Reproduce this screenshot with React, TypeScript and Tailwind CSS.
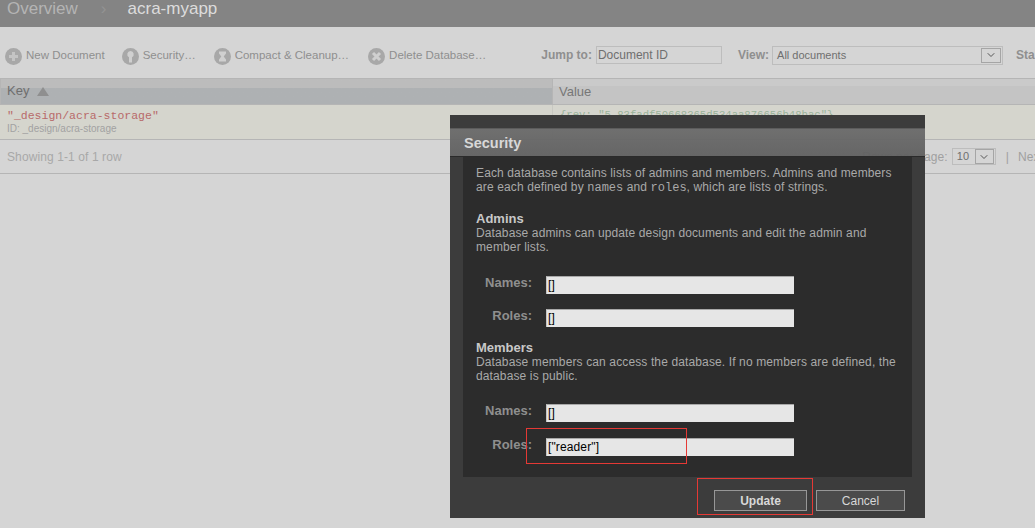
import { ChevronDown } from "lucide-react";

const sans = "font-['Liberation_Sans',Arial,sans-serif]";
const mono = "font-['Liberation_Mono','Courier_New',monospace]";

function CircleIcon({ kind }: { kind: "plus" | "key" | "compact" | "delete" }) {
  return (
    <svg width="17" height="17" viewBox="0 0 17 17" className="shrink-0">
      <circle cx="8.5" cy="8.5" r="8.5" fill="#a8a8a8" />
      {kind === "plus" && <path d="M8.5 4v9M4 8.500h9" stroke="#c4c4c4" strokeWidth="3" />}
      {kind === "key" && (
        <path d="M8.500 3a3.300 3.300 0 0 1 1.500 6.200V14.500H7V9.200A3.300 3.300 0 0 1 8.500 3z" fill="#d0d0d0" />
      )}
      {kind === "compact" && <path d="M5 3.500h7v2L9.700 8.500 12 11.500v2H5v-2l2.300-3L5 5.500z" fill="#d0d0d0" />}
      {kind === "delete" && <path d="M5 5l7 7M12 5l-7 7" stroke="#d0d0d0" strokeWidth="3" />}
    </svg>
  );
}

function ToolItem({ kind, label, className }: { kind: "plus" | "key" | "compact" | "delete"; label: string; className: string }) {
  return (
    <div className={`flex shrink-0 items-center gap-[4px] whitespace-nowrap text-[11.5px] text-[#8f8f8f] ${className}`}>
      <CircleIcon kind={kind} />
      <span className="pb-[1px]">{label}</span>
    </div>
  );
}

function Field({ label, value }: { label: string; value: string }) {
  return (
    <div className="flex h-[18px] items-center">
      <span className="w-[56px] pb-[5px] text-right text-[13px] font-bold leading-none tracking-normal text-[#8f8f8f]">
        {label}
      </span>
      <span className="ml-[14px] flex h-[18px] w-[248px] items-center border-t border-l border-t-[#a8a8a8] border-l-[#c4c4c4] bg-[#e6e6e6] pb-[1px] pl-[1px] text-[12px] text-black">
        {value}
      </span>
    </div>
  );
}

function SecurityModal() {
  return (
    <div className={`absolute left-[450px] top-[115px] z-10 flex h-[403px] w-[475px] flex-col ${sans}`}>
      <div className="h-[13px] bg-[#3c3c3c]" />
      <div className="flex h-[29px] items-center border-y border-t-[#5c5c5c] border-b-[#2a2a2a] bg-gradient-to-b from-[#6a6a6a]/95 to-[#606060]/95 pl-[14px] pt-[2px] text-[14.5px] font-bold text-[#d8d8d8]">
        Security
      </div>
      <div className="flex-1 bg-[#3c3c3c]">
        <div className="mx-[13px] flex h-[320px] flex-col whitespace-nowrap bg-[#2c2c2c] px-[13px] pt-[9px] text-[12px] leading-[14px] tracking-[0.125px] text-[#a9a9a9]">
          <p>Each database contains lists of admins and members. Admins and members</p>
          <p className="h-[14px]">
            are each defined by <code className={`${mono} text-[12px] leading-none tracking-normal`}>names</code> and{" "}
            <code className={`${mono} text-[12px] leading-none tracking-normal`}>roles</code>, which are lists of strings.
          </p>
          <h3 className="mt-[18px] text-[13px] font-bold leading-[14px] tracking-normal text-[#c8c8c8]">Admins</h3>
          <p>Database admins can update design documents and edit the admin and</p>
          <p>member lists.</p>
          <div className="mt-[22px] flex flex-col gap-[15px]">
            <Field label="Names:" value="[]" />
            <Field label="Roles:" value="[]" />
          </div>
          <h3 className="mt-[14px] text-[13px] font-bold leading-[14px] tracking-normal text-[#c8c8c8]">Members</h3>
          <p>Database members can access the database. If no members are defined, the</p>
          <p>database is public.</p>
          <div className="mt-[21px] flex flex-col gap-[16px]">
            <Field label="Names:" value="[]" />
            <Field label="Roles:" value='["reader"]' />
          </div>
        </div>
        <div className="flex justify-end gap-[9px] pr-[20px] pt-[13px]">
          <button className="h-[21px] w-[93px] border border-[#979797] bg-[#4b4b4b] text-[12px] font-bold text-[#d8d8d8]">
            Update
          </button>
          <button className="h-[21px] w-[89px] border border-[#979797] bg-[#4b4b4b] text-[12px] text-[#d8d8d8]">
            Cancel
          </button>
        </div>
      </div>
    </div>
  );
}

export default function App() {
  return (
    <div className={`relative h-[528px] w-[1035px] overflow-hidden bg-[#d5d5d5] ${sans}`}>
      <div className="flex h-[27px] items-center bg-[#848484] pb-[9px] pl-[7px] text-[17px]">
        <span className="text-[#b4b4b4]">Overview</span>
        <span className="ml-[23px] mr-[21px] text-[#939393]">›</span>
        <span className="text-[#dcdcdc]">acra-myapp</span>
      </div>

      <div className="flex h-[51px] items-center whitespace-nowrap pl-[5px] pt-[8px]">
        <ToolItem kind="plus" label="New Document" className="" />
        <ToolItem kind="key" label="Security…" className="ml-[17px]" />
        <ToolItem kind="compact" label="Compact & Cleanup…" className="ml-[18px]" />
        <ToolItem kind="delete" label="Delete Database…" className="ml-[19px]" />
        <span className="ml-[55px] shrink-0 pb-[4px] text-[12px] font-bold text-[#8f8f8f]">Jump to:</span>
        <span className="mb-[3px] ml-[4px] flex h-[18px] w-[126px] shrink-0 items-center border border-[#bdbdbd] pl-[1px] text-[12px] text-[#6f6f6f]">
          Document ID
        </span>
        <span className="ml-[16px] shrink-0 pb-[4px] text-[12px] font-bold text-[#8f8f8f]">View:</span>
        <span className="mb-[3px] ml-[3px] flex h-[19px] w-[231px] shrink-0 items-center justify-between border border-[#bdbdbd] pl-[4px] pr-[1px] text-[11px] text-[#6f6f6f]">
          All documents
          <span className="flex h-[15px] w-[20px] items-center justify-center border border-[#a5a5a5]">
            <ChevronDown size={12} color="#555" />
          </span>
        </span>
        <span className="ml-[13px] shrink-0 pb-[3px] text-[12px] font-bold text-[#8f8f8f]">Sta</span>
      </div>

      <div className="border-y border-[#b5b5b5]">
        <div className="flex h-[26px] border-b border-[#b5b5b5]">
          <div className="flex w-[552px] items-center gap-[8px] border-l border-[#b5b5b5] bg-gradient-to-b from-[#bcbcbc] from-[35%] to-[#aeb1b3] to-[35%] pb-[1px] pl-[6px] text-[13px] text-[#6e6e6e]">
            Key
            <span className="h-0 w-0 border-x-[6px] border-b-[9px] border-x-transparent border-b-[#8f8f8f]" />
          </div>
          <div className="flex flex-1 items-center border-l border-[#b5b5b5] bg-gradient-to-b from-[#cacaca] from-[30%] to-[#c4c4c4] to-[30%] pl-[6px] text-[13px] text-[#777777]">
            Value
          </div>
        </div>
        <div className="flex h-[35px] border-b border-[#b5b5b5] bg-[#d5d5cd]">
          <div className="w-[552px] pl-[7px] pt-[4px]">
            <div className={`${mono} text-[11.5px] leading-[13px] text-[#b86a6a]`}>"_design/acra-storage"</div>
            <div className="text-[10px] leading-[13px] text-[#a2a2a2]">ID: _design/acra-storage</div>
          </div>
          <div className={`border-l border-[#c8c8c2] pl-[7px] pt-[3px] ${mono} text-[10.6px] text-[#9ab39a]`}>
            {'{rev: "5-83fadf50668365d534aa876656b48bac"}'}
          </div>
        </div>
        <div className="flex h-[33px] items-center justify-between whitespace-nowrap pl-[7px] pr-[1px] text-[12px] tracking-[0.1px] text-[#a8a8a8]">
          <span>Showing 1-1 of 1 row</span>
          <span className="mr-[-9px] flex items-center text-[#a0a0a0]">
            Rows per page:
            <span className="ml-[4px] flex h-[17px] w-[44px] items-center justify-between border border-[#bdbdbd] pl-[4px] pr-[1px] text-[11px] text-[#6f6f6f]">
              10
              <span className="flex h-[15px] w-[19px] items-center justify-center border border-[#a5a5a5]">
                <ChevronDown size={12} color="#555" />
              </span>
            </span>
            <span className="ml-[10px]">|</span>
            <span className="ml-[9px]">Next</span>
          </span>
        </div>
      </div>

      <SecurityModal />

      <div className="absolute left-[526px] top-[428px] z-20 h-[36px] w-[161px] border border-[#e53935]" />
      <div className="absolute left-[697px] top-[478px] z-20 h-[37px] w-[116px] border border-[#e53935]" />
    </div>
  );
}
